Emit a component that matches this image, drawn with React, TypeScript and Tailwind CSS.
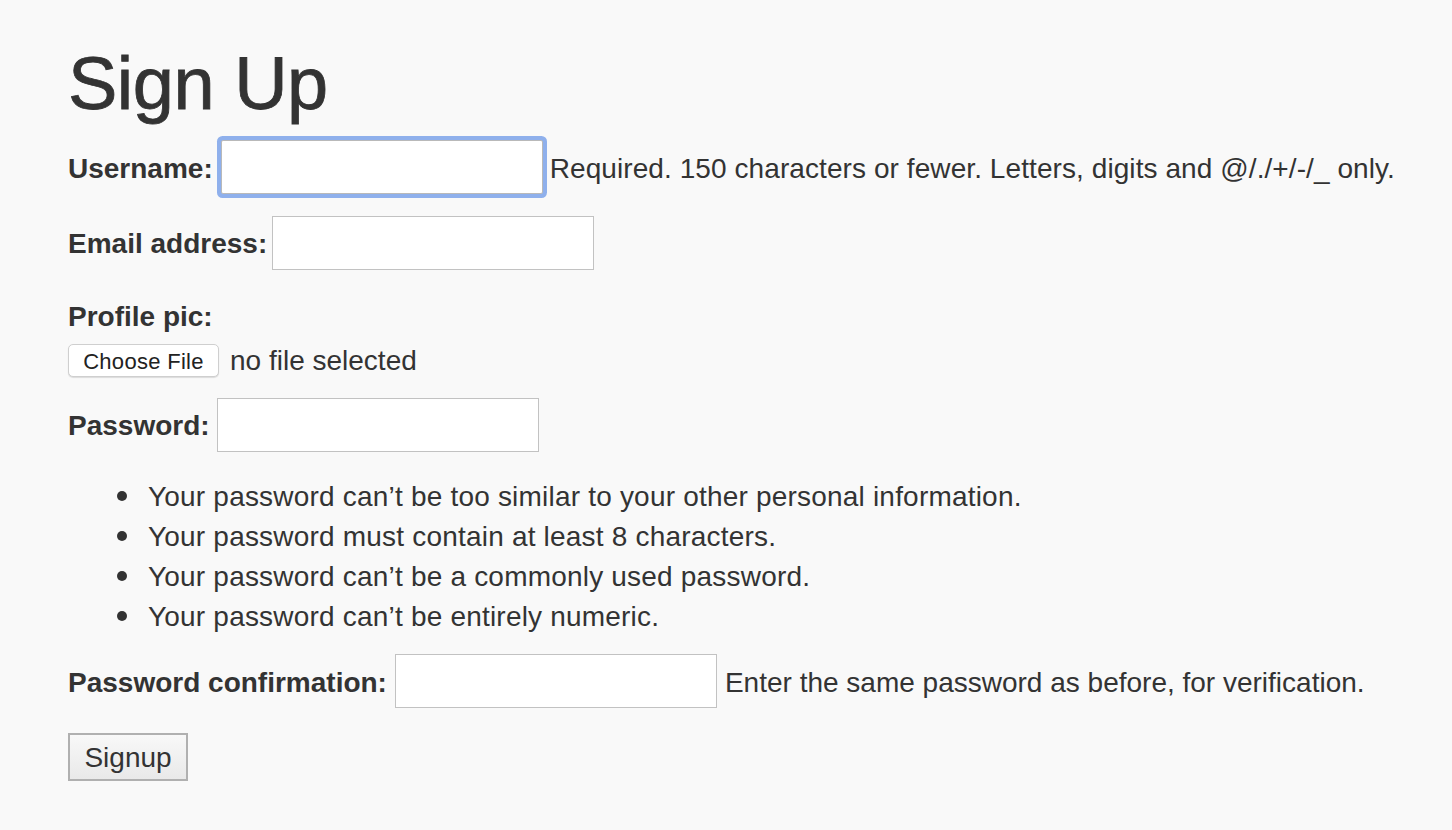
import { useState } from 'react';

const font = { fontFamily: '"Liberation Sans", Arial, Helvetica, sans-serif' };

const hints = [
  'Your password can’t be too similar to your other personal information.',
  'Your password must contain at least 8 characters.',
  'Your password can’t be a commonly used password.',
  'Your password can’t be entirely numeric.',
];

function TextInput({ type = 'text', focused = false }: { type?: string; focused?: boolean }) {
  return (
    <input
      type={type}
      className={
        focused
          ? 'w-[322px] h-[54px] bg-white border border-[#b9b9b9] outline-none shadow-[0_0_0_4px_#8fb0ec] rounded-[2px]'
          : 'w-[322px] h-[54px] bg-white border border-[#c2c2c2] outline-none'
      }
    />
  );
}

export default function App() {
  const [file] = useState<string | null>(null);

  return (
    <div className="min-h-[830px] bg-[#f9f9f9] text-[#333333] text-[28px] pl-[68px] pt-[47px]" style={font}>
      <h1 className="text-[74px] leading-[74px] font-normal tracking-[-0.5px] [-webkit-text-stroke:0.8px_#333333]">Sign Up</h1>

      <form onSubmit={(e) => e.preventDefault()}>
        {/* Username */}
        <div className="mt-[19px] flex items-center h-[54px]">
          <label className="font-bold mr-[8px] pt-[3px]">Username:</label>
          <TextInput focused />
          <span className="ml-[7px] pt-[3px] tracking-[0.08px]">Required. 150 characters or fewer. Letters, digits and @/./+/-/_ only.</span>
        </div>

        {/* Email */}
        <div className="mt-[22px] flex items-center h-[54px]">
          <label className="font-bold mr-[5px] pt-[2px]">Email address:</label>
          <TextInput type="email" />
        </div>

        {/* Profile pic */}
        <div className="mt-[30px] h-[32px] leading-[32px] font-bold pt-[1px]">Profile pic:</div>
        <div className="mt-[12px] flex items-center h-[33px]">
          <button
            type="button"
            className="w-[151px] h-[33px] pt-[2px] bg-white border border-[#cfcfcf] rounded-[5px] shadow-[0_1px_1px_rgba(0,0,0,0.12)] text-[22px] text-[#222222] leading-none tracking-[0.3px]"
          >
            Choose File
          </button>
          <span className="ml-[11px] pt-[1px]">{file ?? 'no file selected'}</span>
        </div>

        {/* Password */}
        <div className="mt-[21px] flex items-center h-[54px]">
          <label className="font-bold mr-[7px] pt-[2px]">Password:</label>
          <TextInput type="password" />
        </div>

        <ul className="mt-[24px]">
          {hints.map((h) => (
            <li key={h} className="flex items-center h-[40px]">
              <span className="ml-[49px] w-[10px] h-[10px] rounded-full bg-[#333333]" />
              <span className="ml-[21px] pt-[1px] tracking-[0.2px]">{h}</span>
            </li>
          ))}
        </ul>

        {/* Password confirmation */}
        <div className="mt-[18px] flex items-center h-[54px]">
          <label className="font-bold mr-[8px] pt-[3px]">Password confirmation:</label>
          <TextInput type="password" />
          <span className="ml-[8px] pt-[3px]">Enter the same password as before, for verification.</span>
        </div>

        <button
          type="submit"
          className="mt-[25px] w-[120px] h-[48px] pt-[2px] border-2 border-[#b0b0b0] bg-gradient-to-b from-[#f8f8f8] to-[#e9e9e9] text-[28px] text-[#333333] leading-none"
        >
          Signup
        </button>
      </form>
    </div>
  );
}
